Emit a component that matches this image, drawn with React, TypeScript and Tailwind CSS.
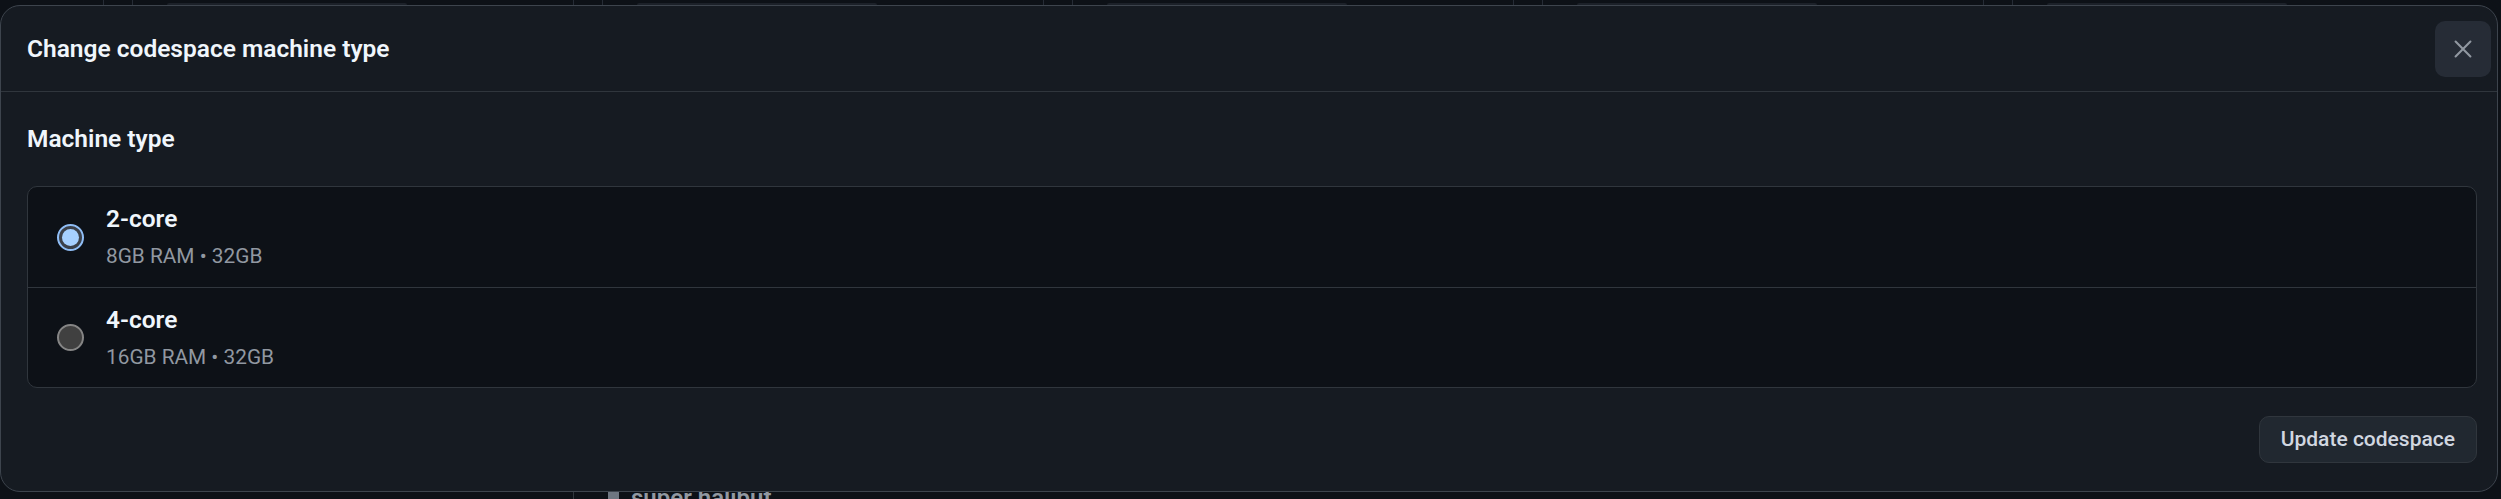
import React from "react";

const machines = [
  { id: "2", name: "2-core", spec: "8GB RAM • 32GB", checked: true },
  { id: "4", name: "4-core", spec: "16GB RAM • 32GB", checked: false },
];

function Radio({ checked }: { checked: boolean }) {
  if (checked) {
    return (
      <div className="h-[27px] w-[27px] shrink-0 rounded-full border-2 border-[#8fbdf5] bg-[#3b4049] p-[3px]">
        <div className="h-full w-full rounded-full bg-[#a6d0ff]" />
      </div>
    );
  }
  return (
    <div className="h-[27px] w-[27px] shrink-0 rounded-full border-2 border-[#858585] bg-[#404040]" />
  );
}

export default function App() {
  return (
    <div className="relative h-[499px] w-[2501px] overflow-hidden bg-[#0d1117] font-['Roboto',sans-serif]">
      {/* page behind the dialog */}
      <div className="flex h-full flex-col">
        <div className="flex h-[5px] pl-[103px]">
          {[0, 1, 2, 3, 4].map((i) => (
            <div key={i} className="flex w-[470px] shrink-0">
              <div className="w-[29px] border-l border-[#262c36]" />
              <div className="w-[35px] border-l border-[#262c36]" />
              <div className="mt-[3px] h-[2px] w-[240px] rounded-t bg-[#1c2129]" />
            </div>
          ))}
        </div>
        <div className="flex-1" />
        <div className="flex h-[17px] items-start pl-[573px]">
          <div className="h-full border-l border-[#30363d]" />
          <div className="ml-[34px] mt-[8px] h-[12px] w-[11px] rounded-[2px] bg-[#6e7681]" />
          <span className="ml-[12px] text-[24px] leading-[33px] font-semibold text-[#9198a1]">
            super halibut
          </span>
        </div>
      </div>

      {/* dialog */}
      <div className="absolute left-0 top-[5px] flex h-[487px] w-[2498px] flex-col rounded-[20px] border border-[#3d444d] bg-[#161b22]">
        <div className="flex h-[86px] shrink-0 items-center justify-between border-b border-[#30363d] pl-[26px] pr-[6px]">
          <h1 className="text-[24.5px] leading-[33px] font-semibold text-[#f0f6fc]">
            Change codespace machine type
          </h1>
          <button className="flex h-[56px] w-[56px] items-center justify-center rounded-[10px] bg-[#262c36]">
            <svg width="22" height="22" viewBox="0 0 16 16" fill="none">
              <path
                d="M2.6 2.6l10.8 10.8M13.4 2.6L2.6 13.4"
                stroke="#9198a1"
                strokeWidth="1.5"
                strokeLinecap="round"
              />
            </svg>
          </button>
        </div>

        <div className="flex flex-1 flex-col pl-[26px] pr-[20px] pt-[30px]">
          <h2 className="text-[24.5px] leading-[33px] font-semibold text-[#f0f6fc]">
            Machine type
          </h2>

          <div className="mt-[31px] overflow-hidden rounded-[10px] border border-[#30363d] bg-[#0d1117]">
            {machines.map((m, i) => (
              <div
                key={m.id}
                className={
                  "flex h-[100px] items-center pl-[29px] " +
                  (i > 0 ? "border-t border-[#30363d]" : "")
                }
              >
                <Radio checked={m.checked} />
                <div className="ml-[22px] flex flex-col">
                  <span className="text-[24.5px] leading-[32px] font-semibold text-[#f0f6fc]">
                    {m.name}
                  </span>
                  <span className="mt-[6px] text-[20.8px] leading-[30px] text-[#9198a1]">
                    {m.spec}
                  </span>
                </div>
              </div>
            ))}
          </div>

          <div className="mt-[28px] flex justify-end">
            <button className="h-[47px] rounded-[10px] border border-[#30363d] bg-[#212830] px-[21px] text-[21px] font-medium text-[#d1d7e0]">
              Update codespace
            </button>
          </div>
        </div>
      </div>
    </div>
  );
}
